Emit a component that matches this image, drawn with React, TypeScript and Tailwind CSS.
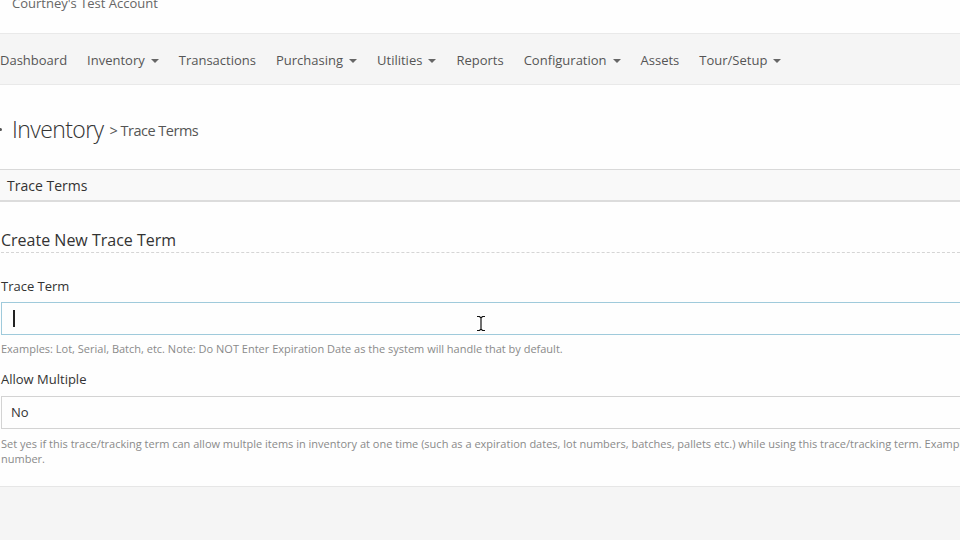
import { ReactNode } from "react";

const navItems: { label: string; caret?: boolean }[] = [
  { label: "Dashboard" },
  { label: "Inventory", caret: true },
  { label: "Transactions" },
  { label: "Purchasing", caret: true },
  { label: "Utilities", caret: true },
  { label: "Reports" },
  { label: "Configuration", caret: true },
  { label: "Assets" },
  { label: "Tour/Setup", caret: true },
];

function Caret() {
  return (
    <span className="ml-[6px] inline-block h-0 w-0 border-x-[4px] border-t-[4px] border-x-transparent border-t-[#666]" />
  );
}

function Label({ children }: { children: ReactNode }) {
  return (
    <p className="text-[13px] leading-[20px] text-[#333]">{children}</p>
  );
}

export default function App() {
  return (
    <div
      className="relative flex h-[540px] w-[960px] flex-col overflow-hidden bg-[#f5f5f5]"
      style={{ fontFamily: '"Open Sans", "Noto Sans", sans-serif' }}
    >
      {/* account header */}
      <div className="h-[33px] shrink-0 bg-[#fefefe] pl-[12px]">
        <p className="-mt-[6px] text-[13px] text-[#666]">
          Courtney's Test Account
        </p>
      </div>

      {/* main nav */}
      <nav className="flex h-[52px] shrink-0 items-center gap-[20px] border-y border-[#e9e9e9] bg-[#f5f5f5] pt-[3px] text-[13px] text-[#555]">
        {navItems.map((item) => (
          <span key={item.label} className="flex items-center">
            {item.label}
            {item.caret && <Caret />}
          </span>
        ))}
      </nav>

      {/* page title */}
      <div className="flex h-[84px] shrink-0 items-center bg-[#fefefe] pt-[4px]">
        <span className="-ml-[2px] mr-[10px] h-[3px] w-[4px] rounded-full bg-[#555]" />
        <h1 className="text-[23px] font-light tracking-[-0.6px] text-[#333]">
          Inventory
        </h1>
        <span className="ml-[6px] mt-[3px] text-[14.5px] tracking-[-0.5px] text-[#555]">
          &gt; Trace Terms
        </span>
      </div>

      {/* panel (runs past the right edge of the window) */}
      <div className="w-[990px] shrink-0 border-t border-[#d9d9d9] bg-[#fefefe]">
        <div className="flex h-[32px] items-center border-b-2 border-[#dcdcdc] bg-[#f9f9f9] pl-[7px] text-[14px] text-[#333]">
          Trace Terms
        </div>

        <div className="pb-[20px] pl-[1px] pt-[27px]">
          <h2 className="border-b border-dashed border-[#d5d5d5] pb-[1px] text-[16px] leading-[22px] text-[#333]">
            Create New Trace Term
          </h2>

          <div className="mt-[23px]">
            <Label>Trace Term</Label>
            <div className="relative mt-[6px] flex h-[33px] items-center border border-[#9fcadb] bg-[#fefefe] pl-[11px]">
              <span className="h-[17px] w-[1.5px] bg-[#222]" />
              <svg
                className="absolute left-[473px] top-[12px]"
                width="12"
                height="17"
                viewBox="0 0 12 17"
              >
                <path
                  d="M2 1.5h2.5L6 3l1.5-1.5H10M6 3v11M2 15.5h2.5L6 14l1.5 1.5H10"
                  fill="none"
                  stroke="#fff"
                  strokeWidth="3"
                />
                <path
                  d="M2 1.5h2.5L6 3l1.5-1.5H10M6 3v11M2 15.5h2.5L6 14l1.5 1.5H10"
                  fill="none"
                  stroke="#111"
                  strokeWidth="1.2"
                />
              </svg>
            </div>
            <p className="mt-[6px] text-[11px] leading-[15px] text-[#8a8a8a]">
              Examples: Lot, Serial, Batch, etc. Note: Do NOT Enter Expiration
              Date as the system will handle that by default.
            </p>
          </div>

          <div className="mt-[13px]">
            <Label>Allow Multiple</Label>
            <div className="mt-[7px] flex h-[33px] items-center border border-[#d3d3d3] bg-[#fefefe] pl-[9px] text-[13px] text-[#333]">
              No
            </div>
            <p className="mt-[7px] w-[975px] text-[11px] leading-[15px] text-[#8a8a8a]">
              Set yes if this trace/tracking term can allow multple items in
              inventory at one time (such as a expiration dates, lot numbers,
              batches, pallets etc.) while using this trace/tracking term.
              Example: number.
            </p>
          </div>
        </div>
      </div>
      <div className="h-px shrink-0 bg-[#e6e6e6]" />
    </div>
  );
}
